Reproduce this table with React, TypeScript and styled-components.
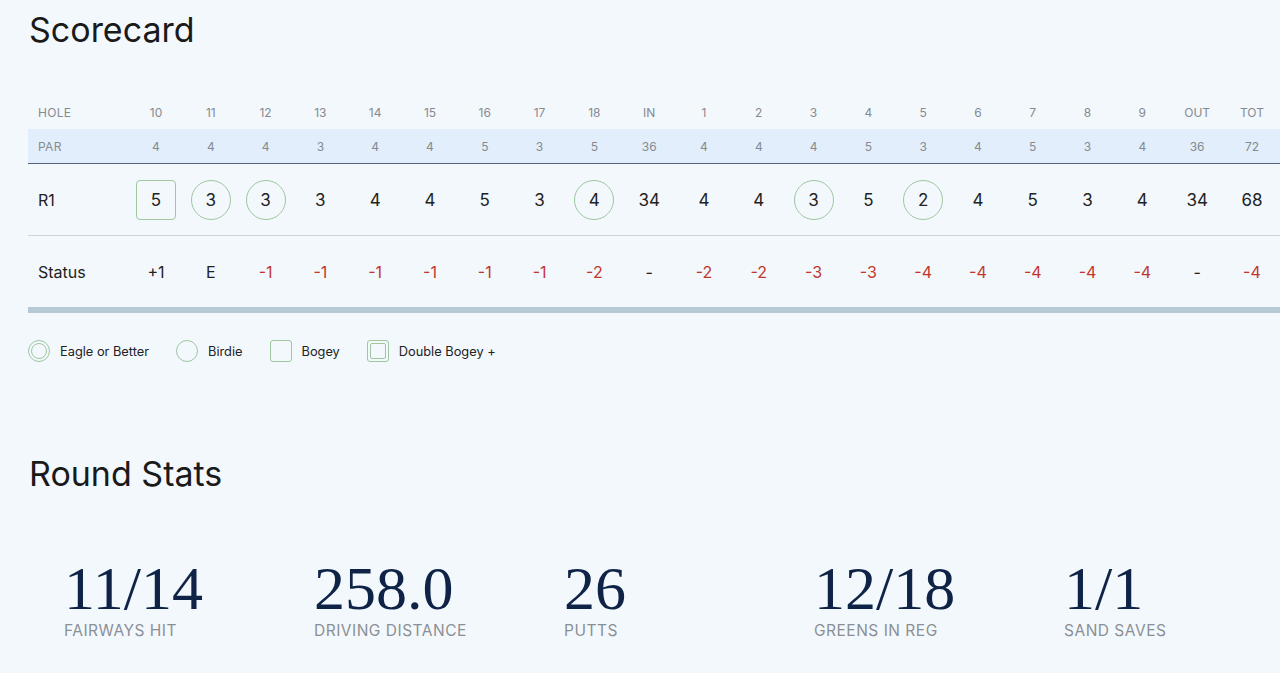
import React from "react";
import styled, { createGlobalStyle } from "styled-components";

const GlobalStyle = createGlobalStyle`
  html, body {
    margin: 0;
    padding: 0;
    background: #f3f8fd;
    overflow: hidden;
  }
  body {
    font-family: "Inter", "Roboto", sans-serif;
    color: #1c1c1c;
  }
`;

type Mark = "eagle" | "birdie" | "bogey" | "double" | undefined;

const holes = ["10", "11", "12", "13", "14", "15", "16", "17", "18", "IN", "1", "2", "3", "4", "5", "6", "7", "8", "9", "OUT", "TOT"];
const pars = ["4", "4", "4", "3", "4", "4", "5", "3", "5", "36", "4", "4", "4", "5", "3", "4", "5", "3", "4", "36", "72"];
const scores: { v: string; mark?: Mark }[] = [
  { v: "5", mark: "bogey" },
  { v: "3", mark: "birdie" },
  { v: "3", mark: "birdie" },
  { v: "3" },
  { v: "4" },
  { v: "4" },
  { v: "5" },
  { v: "3" },
  { v: "4", mark: "birdie" },
  { v: "34" },
  { v: "4" },
  { v: "4" },
  { v: "3", mark: "birdie" },
  { v: "5" },
  { v: "2", mark: "birdie" },
  { v: "4" },
  { v: "5" },
  { v: "3" },
  { v: "4" },
  { v: "34" },
  { v: "68" },
];
const status = ["+1", "E", "-1", "-1", "-1", "-1", "-1", "-1", "-2", "-", "-2", "-2", "-3", "-3", "-4", "-4", "-4", "-4", "-4", "-", "-4"];

const stats = [
  { value: "11/14", label: "FAIRWAYS HIT" },
  { value: "258.0", label: "DRIVING DISTANCE" },
  { value: "26", label: "PUTTS" },
  { value: "12/18", label: "GREENS IN REG" },
  { value: "1/1", label: "SAND SAVES" },
];

const Page = styled.div`
  padding-left: 28px;
`;

const Title = styled.h1`
  margin: 0;
  padding-left: 1px;
  font-size: 34px;
  font-weight: 400;
  line-height: 40px;
  color: #1a1a1a;
`;

const ScorecardTitle = styled(Title)`
  padding-top: 10px;
`;

const Table = styled.div`
  margin-top: 45px;
  width: 1252px;
`;

const Row = styled.div<{ $h: number; $bg?: string; $border?: string }>`
  display: grid;
  grid-template-columns: 100.6px repeat(21, 54.8px);
  align-items: center;
  height: ${(p) => p.$h}px;
  background: ${(p) => p.$bg || "transparent"};
  border-bottom: ${(p) => p.$border || "none"};
`;

const HeadLabel = styled.div`
  padding-left: 10px;
  font-size: 12px;
  color: #858a90;
  letter-spacing: 0.3px;
`;

const HeadCell = styled.div`
  text-align: center;
  font-size: 12px;
  color: #858a90;
`;

const RowLabel = styled.div`
  padding-left: 10px;
  font-size: 16px;
  color: #222;
`;

const ScoreCell = styled.div`
  display: flex;
  justify-content: center;
`;

const ScoreMark = styled.div<{ $mark?: Mark }>`
  width: 40px;
  height: 40px;
  box-sizing: border-box;
  display: flex;
  align-items: center;
  justify-content: center;
  font-size: 17px;
  color: #222;
  border: ${(p) => (p.$mark ? "1px solid #9fc79f" : "none")};
  border-radius: ${(p) => (p.$mark === "birdie" || p.$mark === "eagle" ? "50%" : "4px")};
`;

const StatusCell = styled.div<{ $under: boolean }>`
  text-align: center;
  font-size: 16px;
  color: ${(p) => (p.$under ? "#c2362c" : "#222")};
`;

const Bar = styled.div`
  height: 6px;
  background: #b7c9d5;
`;

const Legend = styled.div`
  display: flex;
  align-items: center;
  gap: 27px;
  margin-top: 27px;
`;

const LegendItem = styled.div`
  display: flex;
  align-items: center;
  gap: 10px;
  font-size: 12.8px;
  color: #222;
`;

const Swatch = styled.div<{ $round: boolean; $double: boolean }>`
  width: 22px;
  height: 22px;
  box-sizing: border-box;
  border: 1px solid #9fc79f;
  border-radius: ${(p) => (p.$round ? "50%" : "3px")};
  display: flex;
  align-items: center;
  justify-content: center;

  &::after {
    content: "";
    display: ${(p) => (p.$double ? "block" : "none")};
    width: 16px;
    height: 16px;
    box-sizing: border-box;
    border: 1px solid #9fc79f;
    border-radius: ${(p) => (p.$round ? "50%" : "2px")};
  }
`;

const StatsTitle = styled(Title)`
  margin-top: 92px;
`;

const StatsGrid = styled.div`
  display: grid;
  grid-template-columns: repeat(5, 250px);
  padding-left: 36px;
  margin-top: 64px;
`;

const Stat = styled.div`
  display: flex;
  flex-direction: column;
`;

const StatValue = styled.div`
  font-family: "Liberation Serif", "DejaVu Serif", serif;
  font-size: 62px;
  line-height: 60px;
  color: #0f2346;
`;

const StatLabel = styled.div`
  margin-top: 3px;
  font-size: 15.5px;
  color: #8b8f95;
  letter-spacing: 0.5px;
`;

const legend = [
  { label: "Eagle or Better", round: true, double: true },
  { label: "Birdie", round: true, double: false },
  { label: "Bogey", round: false, double: false },
  { label: "Double Bogey +", round: false, double: true },
];

export default function App() {
  return (
    <Page>
      <GlobalStyle />
      <ScorecardTitle>Scorecard</ScorecardTitle>
      <Table>
        <Row $h={34}>
          <HeadLabel>HOLE</HeadLabel>
          {holes.map((h, i) => (
            <HeadCell key={i}>{h}</HeadCell>
          ))}
        </Row>
        <Row $h={34} $bg="#e2eefb" $border="1px solid #56627a">
          <HeadLabel>PAR</HeadLabel>
          {pars.map((p, i) => (
            <HeadCell key={i}>{p}</HeadCell>
          ))}
        </Row>
        <Row $h={71} $border="1px solid #cbd5df">
          <RowLabel>R1</RowLabel>
          {scores.map((s, i) => (
            <ScoreCell key={i}>
              <ScoreMark $mark={s.mark}>{s.v}</ScoreMark>
            </ScoreCell>
          ))}
        </Row>
        <Row $h={71}>
          <RowLabel>Status</RowLabel>
          {status.map((s, i) => (
            <StatusCell key={i} $under={s.startsWith("-") && s.length > 1}>
              {s}
            </StatusCell>
          ))}
        </Row>
        <Bar />
      </Table>
      <Legend>
        {legend.map((l) => (
          <LegendItem key={l.label}>
            <Swatch $round={l.round} $double={l.double} />
            {l.label}
          </LegendItem>
        ))}
      </Legend>
      <StatsTitle>Round Stats</StatsTitle>
      <StatsGrid>
        {stats.map((s) => (
          <Stat key={s.label}>
            <StatValue>{s.value}</StatValue>
            <StatLabel>{s.label}</StatLabel>
          </Stat>
        ))}
      </StatsGrid>
    </Page>
  );
}
